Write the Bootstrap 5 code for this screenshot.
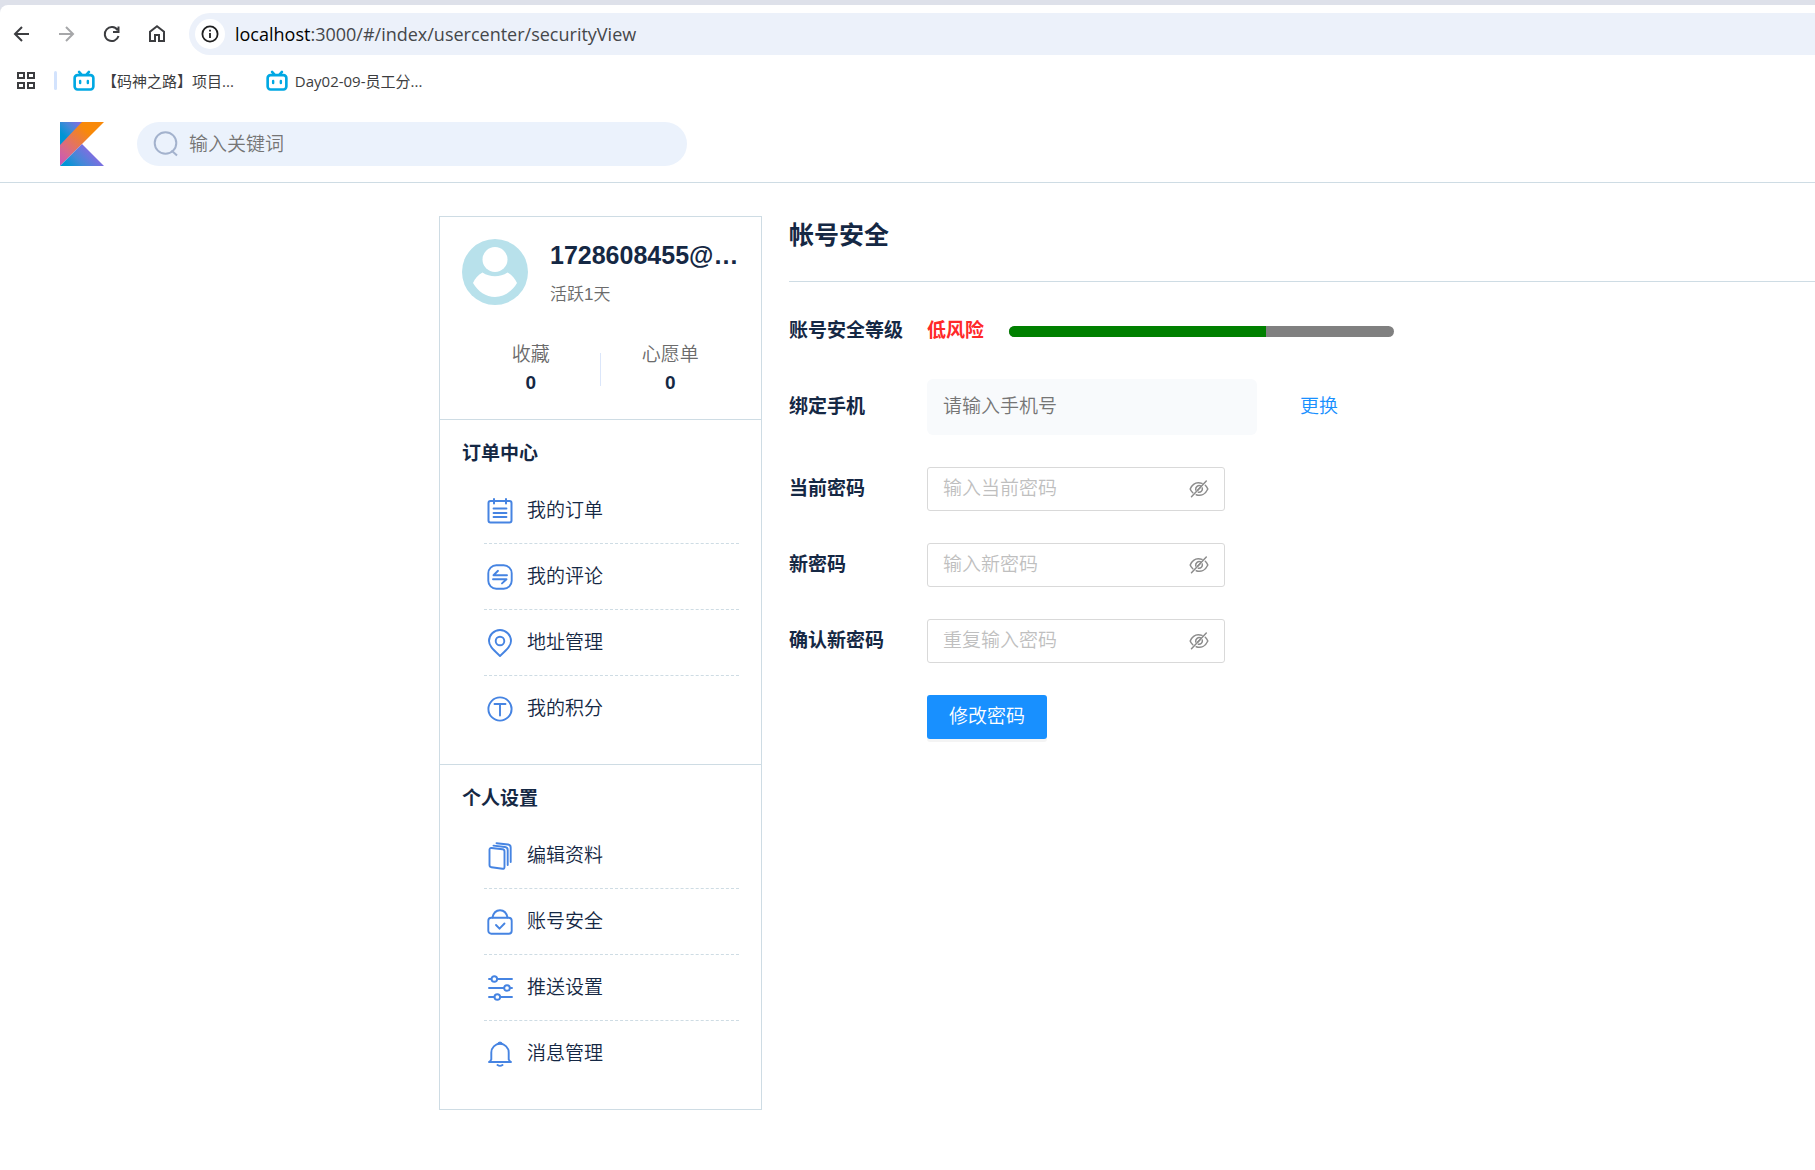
<!DOCTYPE html>
<html lang="zh-CN">
<head>
<meta charset="utf-8">
<meta name="viewport" content="width=device-width, initial-scale=1">
<title>帐号安全</title>
<link rel="stylesheet" href="https://cdn.jsdelivr.net/npm/bootstrap@5.3.0/dist/css/bootstrap.min.css">
<style>
  :root { --ink: #152844; --line: #cedce4; --accent: #1890ff; --icon: #4684e2; --muted: #6b6b6b; }
  body { font-family: "Liberation Sans", "Noto Sans CJK SC", sans-serif; font-size: 19px; line-height: 28px; color: var(--ink); background: #fff; overflow-x: hidden; }
  button, input { font-family: inherit; }
  svg { display: block; flex: none; }
  .thin { font-weight: 350; }

  /* browser chrome */
  .tabstrip { height: 13px; background: #dee1ea; }
  .tabstrip-edge { height: 8px; margin-top: -8px; background: #fff; border-top-left-radius: 8px; }
  .toolbar { height: 42px; padding-left: 9px; }
  .tool-group { gap: 19px; }
  .tool-btn { width: 26px; height: 26px; padding: 0; border: 0; background: none; color: #3c3d40; }
  .tool-btn:disabled { color: #a6a7a9; }
  .omnibox { height: 42px; margin-left: 19px; padding-left: 6px; background: #ecf1fa; border-radius: 21px 0 0 21px; color: #45474a; font-family: "Open Sans", sans-serif; font-size: 18px; }
  .site-info { width: 30px; height: 30px; border-radius: 50%; background: #fff; color: #1f1f1f; }
  .url-text { margin-left: 10px; }
  .bookmarks { height: 51px; padding-left: 15px; font-family: "Open Sans", "Noto Sans CJK SC", sans-serif; font-size: 15px; }
  .bookmarks a { color: #3c3d40; text-decoration: none; gap: 7px; }
  .bm-divider { width: 3px; height: 19px; margin: 0 16px 0 13px; background: #d3e3fd; border-radius: 2px; }

  /* site header */
  .site-header { height: 77px; padding-left: 60px; gap: 33px; border-bottom: 1px solid var(--line); }
  .search-pill { width: 550px; height: 44px; padding-left: 16px; gap: 10px; border-radius: 22px; background: #ebf2fc; }
  .search-pill input { border: 0; outline: 0; background: none; padding: 2px 0 0; color: var(--ink); }
  .search-pill input::placeholder { color: #757575; font-weight: 350; }

  /* page */
  .page-main { padding: 33px 0 33px 439px; gap: 27px; }
  .user-panel { flex: 0 0 323px; border: 1px solid var(--line); }
  .user-panel section { padding: 22px; }
  .user-panel section + section { border-top: 1px solid var(--line); padding: 20px 22px 23px; }
  .user-brief { gap: 22px; }
  .user-name { font-size: 25px; line-height: 33px; font-weight: 700; margin: 0; }
  .user-sub { font-size: 17px; line-height: 22px; color: var(--muted); }
  .stat-label { color: var(--muted); }
  .stat-divider { width: 2px; height: 33px; background: #dbe6fa; }
  .stats { padding-top: 35px; }
  .section-title { font-size: 19px; line-height: 28px; font-weight: 700; margin: 0 0 10px; }
  .menu-list { margin: 0 0 0 22px; }
  .menu-list a { height: 65px; padding-left: 3px; gap: 14px; color: var(--ink); text-decoration: none; }
  .menu-list li + li { border-top: 1px dashed var(--line); }
  .menu-list svg { color: var(--icon); }

  .content-title { font-size: 25px; line-height: 38px; font-weight: 700; margin: 0; padding-bottom: 27px; border-bottom: 1px solid var(--line); }
  .form-rows { padding-top: 33px; gap: 32px; }
  .form-rows .field-label { width: 138px; flex: none; font-weight: 700; }
  .level-row { height: 32px; }
  .risk { color: #ff2929; font-weight: 700; margin-right: 25px; }
  .level-bar { width: 385px; height: 11px; border-radius: 6px; background: #808080; }
  .level-bar .progress-bar { background: #008000; }
  .phone-input { width: 330px; height: 56px; padding: 0 16px; font-size: 19px; border: 0; border-radius: 6px; background: #f8fafc; }
  .phone-input::placeholder { color: #757575; font-weight: 350; }
  .swap-link { color: var(--accent); text-decoration: none; margin-left: 43px; }
  .pwd-box { width: 298px; height: 44px; padding: 0 15px; border: 1px solid #d9d9d9; border-radius: 3px; }
  .pwd-box input { border: 0; outline: 0; padding: 0; background: none; min-width: 0; }
  .pwd-box input::placeholder { color: #bfbfbf; font-weight: 350; }
  .pwd-box button { padding: 0; border: 0; background: none; color: #8c8c8c; }
  .submit-btn { width: 120px; height: 44px; padding: 0; margin-left: 138px; font-size: 19px; line-height: 28px; border-radius: 3px; border: 0; color: #fff; background: var(--accent); box-shadow: 0 3px 0 rgba(0,0,0,.045); }
</style>
</head>
<body>
<svg class="d-none" aria-hidden="true">
  <symbol id="tv" viewBox="0 0 20 20"><path d="M5.500 1.800 7.500 4M14.500 1.800 12.500 4" stroke="#00a8e3" stroke-width="2.400" stroke-linecap="round"/><rect x="1.500" y="4.700" width="17" height="13" rx="2.600" fill="#fff" stroke="#00a8e3" stroke-width="2.400"/><path d="M6.500 9.900v2M13.500 9.900v2" stroke="#00a8e3" stroke-width="2.200" stroke-linecap="round"/></symbol>
  <symbol id="eye-off" viewBox="0 0 20 20"><g fill="none" stroke="currentColor" stroke-width="1.500" stroke-linecap="round"><path d="M13 4.400C6.500 2.300 3 6 1.200 10c.6 1.500 1.500 2.800 2.600 3.800M16.300 6.300c1.100 1 1.900 2.300 2.500 3.700-2.200 5-6.700 7.300-11.600 5.700"/><path d="M11.800 6.900C9 5.800 6.300 8 6.700 11M13.300 9c.6 2.500-1.600 4.700-4 4.200"/><path d="M17.300 2 2.500 17.700"/><path d="M8.700 11.200 11.500 8.300"/></g></symbol>
</svg>

<div class="tabstrip"></div>
<div class="tabstrip-edge"></div>
<nav class="toolbar d-flex align-items-center" aria-label="浏览器">
  <div class="tool-group d-flex">
    <button class="tool-btn" aria-label="后退"><svg width="26" height="26" viewBox="0 0 26 26" fill="none" stroke="currentColor" stroke-width="2"><path d="M20 13H6M13 6 6 13l7 7"/></svg></button>
    <button class="tool-btn" aria-label="前进" disabled><svg width="26" height="26" viewBox="0 0 26 26" fill="none" stroke="currentColor" stroke-width="2"><path d="M5 13h14M12 6l7 7-7 7"/></svg></button>
    <button class="tool-btn" aria-label="刷新"><svg width="26" height="26" viewBox="0 0 26 26" fill="none" stroke="currentColor" stroke-width="2"><path d="M18.600 9.200A7 7 0 1 0 19.500 15M19.500 5.500V11H14"/></svg></button>
    <button class="tool-btn" aria-label="主页"><svg width="26" height="26" viewBox="0 0 26 26" fill="none" stroke="currentColor" stroke-width="2"><path d="M6 20V10.700L13 5.300l7 5.400V20h-5v-6h-4v6z"/></svg></button>
  </div>
  <div class="omnibox d-flex flex-fill align-items-center">
    <span class="site-info d-flex align-items-center justify-content-center"><svg width="18" height="18" viewBox="0 0 18 18" fill="none" stroke="currentColor" stroke-width="1.800"><circle cx="9" cy="9" r="7.600"/><path d="M9 8v5M9 4.800v1.800"/></svg></span>
    <span class="url-text"><span class="text-black">localhost</span>:3000/#/index/usercenter/securityView</span>
  </div>
</nav>
<nav class="bookmarks d-flex align-items-center" aria-label="书签">
  <button class="tool-btn d-flex align-items-center" aria-label="应用"><svg width="22" height="22" viewBox="0 0 22 22" fill="none" stroke="currentColor" stroke-width="2"><path d="M3 3h6v5H3zM13 3h6v5h-6zM3 13h6v5H3zM13 13h6v5h-6z"/></svg></button>
  <span class="bm-divider"></span>
  <a href="#" class="d-flex align-items-center"><svg width="22" height="22"><use href="#tv"/></svg><span>【码神之路】项目...</span></a>
  <a href="#" class="d-flex align-items-center ms-4 ps-2"><svg width="22" height="22"><use href="#tv"/></svg><span>Day02-09-员工分...</span></a>
</nav>

<header class="site-header d-flex align-items-center">
  <a href="#" aria-label="首页"><svg width="44" height="44" viewBox="0 0 44 44">
    <defs>
      <linearGradient id="k1" gradientUnits="userSpaceOnUse" x1="12" y1="52" x2="32" y2="32"><stop offset=".1" stop-color="#0095d5"/><stop offset=".5" stop-color="#4289d8"/><stop offset="1" stop-color="#7c6fe0"/></linearGradient>
      <linearGradient id="k2" gradientUnits="userSpaceOnUse" x1="0" y1="42" x2="40" y2="2"><stop offset="0" stop-color="#c757bc"/><stop offset=".25" stop-color="#d9698a"/><stop offset=".55" stop-color="#ec7c3d"/><stop offset=".75" stop-color="#f88909"/></linearGradient>
      <linearGradient id="k3" gradientUnits="userSpaceOnUse" x1="4" y1="14" x2="18" y2="0"><stop offset="0" stop-color="#0095d5"/><stop offset=".5" stop-color="#4289d8"/><stop offset="1" stop-color="#7c6fe0"/></linearGradient>
    </defs>
    <path d="M0 0h23L0 24z" fill="url(#k3)"/><path d="M22 0h22L0 44V23z" fill="url(#k2)"/><path d="M0 44 22 22l22 22z" fill="url(#k1)"/>
  </svg></a>
  <label class="search-pill d-flex align-items-center">
    <svg width="26" height="26" viewBox="0 0 26 26" fill="none" stroke="#a3b2cd" stroke-width="2"><circle cx="12.500" cy="12" r="10.800"/><path d="M18.500 19.500 24 24.500"/></svg>
    <input type="search" class="flex-fill" placeholder="输入关键词" aria-label="搜索">
  </label>
</header>

<main class="page-main d-flex align-items-start">
  <aside class="user-panel">
    <section>
      <div class="user-brief d-flex">
        <svg width="66" height="66" viewBox="0 0 66 66"><circle cx="33" cy="33" r="33" fill="#b8e1eb"/><circle cx="33" cy="20.500" r="12.500" fill="#fff"/><path d="M20.500 33.500c7.500 5 17.500 5 25 0 4.500 2.500 7.500 6 9.500 10.500C50 52.500 42 58 33 58S16 52.500 11 44c2-4.500 5-8 9.500-10.500z" fill="#fff"/></svg>
        <div>
          <h1 class="user-name text-nowrap">1728608455@…</h1>
          <div class="user-sub thin mt-2 pt-1">活跃1天</div>
        </div>
      </div>
      <div class="stats d-flex align-items-center text-center">
        <div class="flex-fill w-50"><div class="stat-label thin">收藏</div><div class="fw-bold">0</div></div>
        <span class="stat-divider"></span>
        <div class="flex-fill w-50"><div class="stat-label thin">心愿单</div><div class="fw-bold">0</div></div>
      </div>
    </section>
    <section>
      <h2 class="section-title">订单中心</h2>
      <ul class="menu-list list-unstyled thin">
        <li><a href="#" class="d-flex align-items-center"><svg width="26" height="26" viewBox="0 0 26 26" fill="none" stroke="currentColor" stroke-width="2" stroke-linecap="round"><rect x="1.500" y="3" width="23" height="21.500" rx="2"/><path d="M7 1v4.500M19 1v4.500"/><path d="M6.500 10.500h13M6.500 15h13M6.500 19h13" stroke-width="1.800"/></svg>我的订单</a></li>
        <li><a href="#" class="d-flex align-items-center"><svg width="26" height="26" viewBox="0 0 26 26" fill="none" stroke="currentColor" stroke-width="1.900" stroke-linecap="round" stroke-linejoin="round"><rect x="1.300" y="1.300" width="23.400" height="23.400" rx="8"/><path d="M20 11.200H6.500l4.500-4.400M6 15.200h13.500L15 19.400"/></svg>我的评论</a></li>
        <li><a href="#" class="d-flex align-items-center"><svg width="26" height="28" viewBox="0 0 26 28" fill="none" stroke="currentColor" stroke-width="1.900" stroke-linejoin="round"><path d="M13 27C5 19.500 2 16.500 2 12a11 11 0 0 1 22 0c0 4.500-3 7.500-11 15z"/><circle cx="13" cy="12" r="4.300"/></svg>地址管理</a></li>
        <li><a href="#" class="d-flex align-items-center"><svg width="26" height="26" viewBox="0 0 26 26" fill="none" stroke="currentColor" stroke-width="1.900" stroke-linecap="round"><circle cx="13" cy="13" r="11.600"/><path d="M7.500 8h11M13 8v11.500"/></svg>我的积分</a></li>
      </ul>
    </section>
    <section>
      <h2 class="section-title">个人设置</h2>
      <ul class="menu-list list-unstyled thin">
        <li><a href="#" class="d-flex align-items-center"><svg width="26" height="28" viewBox="0 0 26 28" fill="none" stroke="currentColor" stroke-width="1.900" stroke-linejoin="round" stroke-linecap="round"><path d="M4.500 6 15.500 7.300q2 .2 2 2.200V25q0 2-2 1.700L4.500 25.200q-2-.2-2-2.200V7.800q0-2 2-1.800z"/><path d="M6.500 3.600 18 5q2.700.3 2.700 3v15M9.500 1.200 21 2.500q2.700.3 2.700 3V20"/></svg>编辑资料</a></li>
        <li><a href="#" class="d-flex align-items-center"><svg width="26" height="26" viewBox="0 0 26 26" fill="none" stroke="currentColor" stroke-width="1.900" stroke-linecap="round" stroke-linejoin="round"><rect x="1.300" y="8.700" width="23.400" height="16" rx="3"/><path d="M5.500 8.500C6.500 3.500 9.500 1.200 13 1.200s6.500 2.300 7.500 7.300M9 16l3.500 3.700 5-5.200"/></svg>账号安全</a></li>
        <li><a href="#" class="d-flex align-items-center"><svg width="26" height="26" viewBox="0 0 26 26" fill="none" stroke="currentColor" stroke-width="1.900" stroke-linecap="round"><path d="M2 4h2.500M10.500 4H25M2 13h15M23.500 13H25M2 22h5.500M13.500 22H25"/><circle cx="7.300" cy="4" r="2.800"/><circle cx="20" cy="13" r="2.800"/><circle cx="10.300" cy="22" r="2.800"/></svg>推送设置</a></li>
        <li><a href="#" class="d-flex align-items-center"><svg width="26" height="26" viewBox="0 0 26 26" fill="none" stroke="currentColor" stroke-width="1.900" stroke-linecap="round" stroke-linejoin="round"><path d="M2 21h22M2.500 21l1.800-2.500V11.500a8.700 8.700 0 0 1 17.400 0v7l1.800 2.500M10.500 24q2.500 1.800 5 0"/><path d="M10.500 2.500a2.600 2 0 0 1 5 0z" fill="currentColor" stroke-width="1"/></svg>消息管理</a></li>
      </ul>
    </section>
  </aside>

  <div class="flex-fill">
    <h2 class="content-title">帐号安全</h2>
    <form class="form-rows d-flex flex-column">
      <div class="level-row d-flex align-items-center">
        <span class="field-label">账号安全等级</span>
        <span class="risk">低风险</span>
        <div class="progress level-bar" role="progressbar" aria-label="账号安全等级" aria-valuenow="67" aria-valuemin="0" aria-valuemax="100"><div class="progress-bar" style="width:66.7%"></div></div>
      </div>
      <div class="d-flex align-items-center">
        <label class="field-label" for="phone">绑定手机</label>
        <input id="phone" type="tel" class="phone-input" placeholder="请输入手机号">
        <a href="#" class="swap-link thin">更换</a>
      </div>
      <div class="d-flex align-items-center">
        <label class="field-label" for="pwd-now">当前密码</label>
        <div class="pwd-box d-flex align-items-center"><input id="pwd-now" type="password" class="flex-fill" placeholder="输入当前密码"><button type="button" class="ms-2" aria-label="显示密码"><svg width="20" height="20"><use href="#eye-off"/></svg></button></div>
      </div>
      <div class="d-flex align-items-center">
        <label class="field-label" for="pwd-new">新密码</label>
        <div class="pwd-box d-flex align-items-center"><input id="pwd-new" type="password" class="flex-fill" placeholder="输入新密码"><button type="button" class="ms-2" aria-label="显示密码"><svg width="20" height="20"><use href="#eye-off"/></svg></button></div>
      </div>
      <div class="d-flex align-items-center">
        <label class="field-label" for="pwd-again">确认新密码</label>
        <div class="pwd-box d-flex align-items-center"><input id="pwd-again" type="password" class="flex-fill" placeholder="重复输入密码"><button type="button" class="ms-2" aria-label="显示密码"><svg width="20" height="20"><use href="#eye-off"/></svg></button></div>
      </div>
      <div><button type="button" class="submit-btn btn thin">修改密码</button></div>
    </form>
  </div>
</main>
<script src="https://cdn.jsdelivr.net/npm/bootstrap@5.3.0/dist/js/bootstrap.bundle.min.js"></script>
</body>
</html>
